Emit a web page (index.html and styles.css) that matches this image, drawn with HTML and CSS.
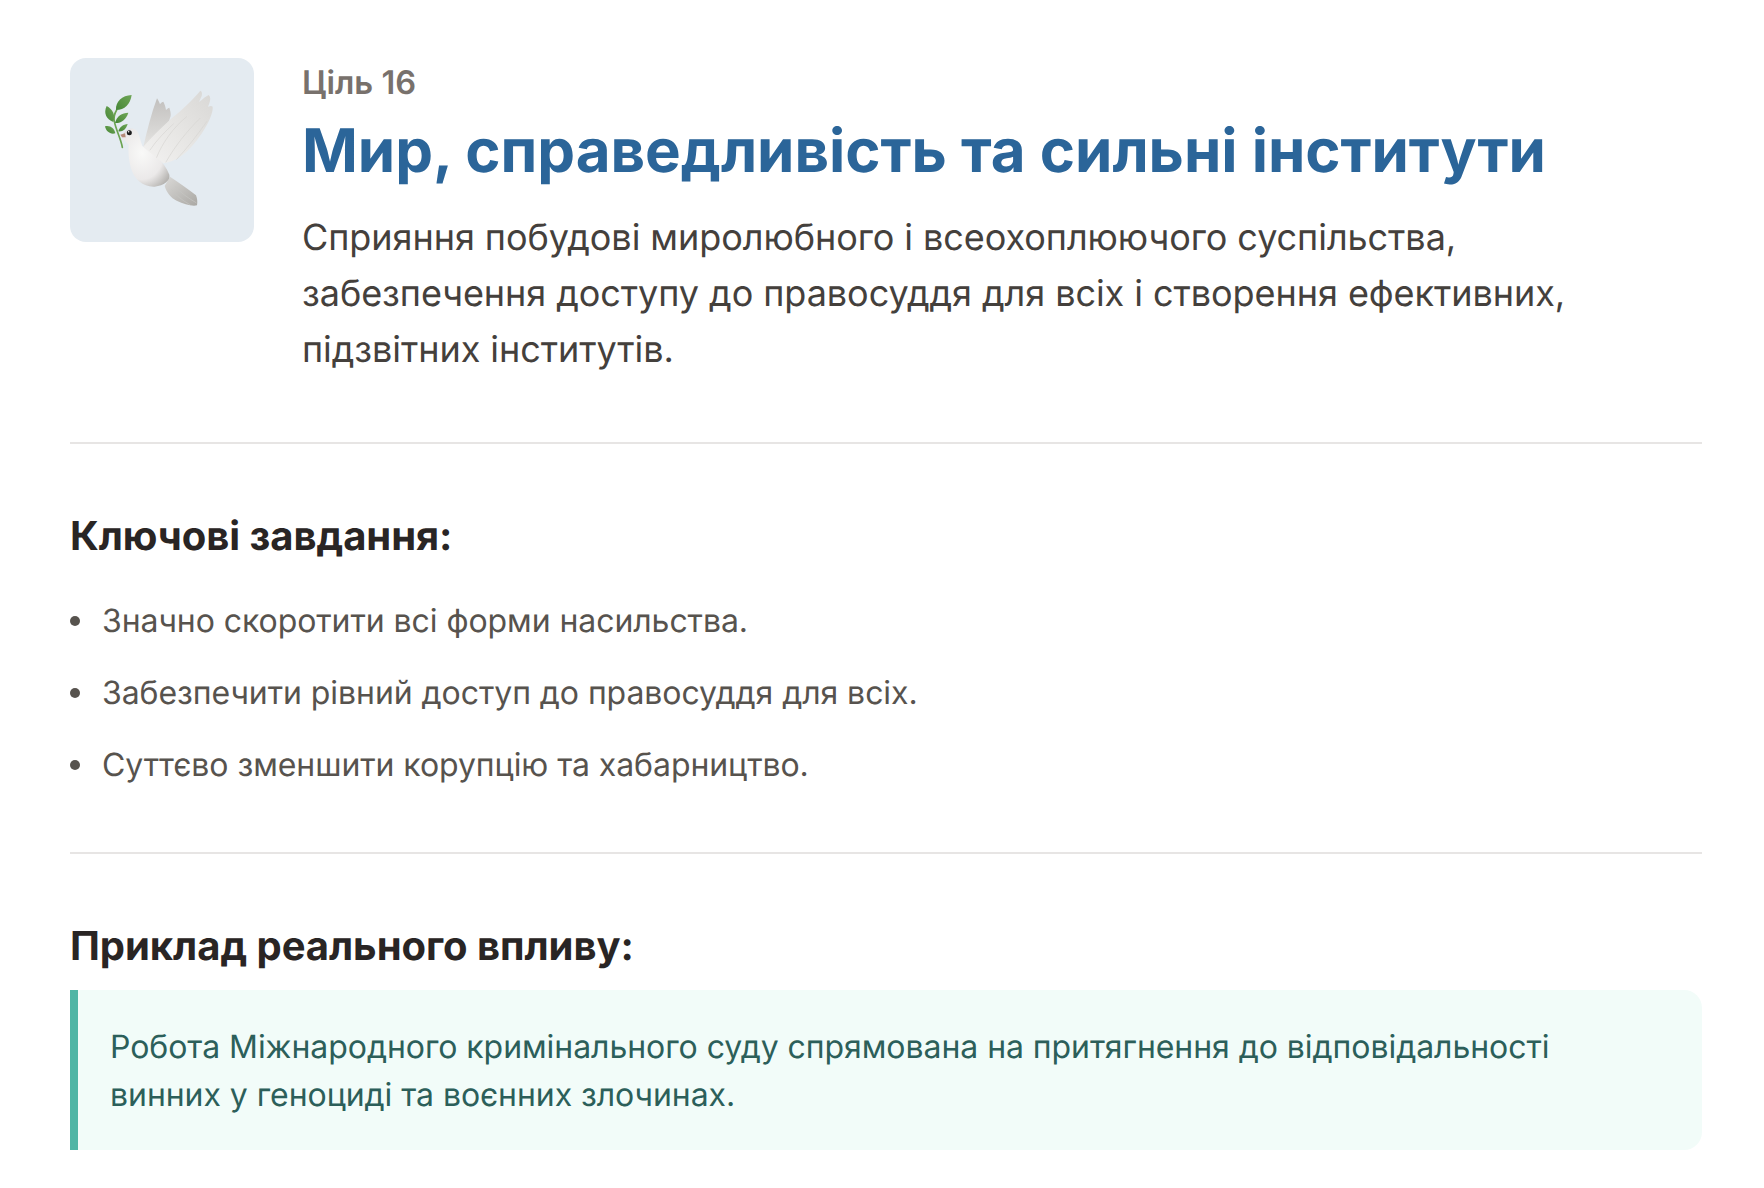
FILE: index.html
```html
<!DOCTYPE html>
<html lang="uk">
<head>
<meta charset="utf-8">
<title>Ціль 16</title>
<link rel="stylesheet" href="styles.css">
</head>
<body>
<main class="page">
  <header class="head">
    <div class="icon">
      <svg class="dove" viewBox="30 24 552 552" aria-hidden="true">
        <defs>
          <linearGradient id="wingBack" x1="0" y1="0" x2="0" y2="1">
            <stop offset="0" stop-color="#c2c0be"/><stop offset=".6" stop-color="#d6d5d3"/><stop offset="1" stop-color="#e6e5e3"/>
          </linearGradient>
          <linearGradient id="wingFront" x1="1" y1="0" x2="0" y2="1">
            <stop offset="0" stop-color="#d8d7d5"/><stop offset=".5" stop-color="#e6e5e3"/><stop offset="1" stop-color="#f3f2f1"/>
          </linearGradient>
          <radialGradient id="bodyFill" cx=".42" cy=".42" r=".7">
            <stop offset="0" stop-color="#f9f9f8"/><stop offset=".65" stop-color="#ebe9e9"/><stop offset="1" stop-color="#b6b4b1"/>
          </radialGradient>
          <linearGradient id="tailFill" x1="0" y1="0" x2="1" y2="1">
            <stop offset="0" stop-color="#dad9d7"/><stop offset="1" stop-color="#aaa8a4"/>
          </linearGradient>
          <linearGradient id="leafFill" x1="0" y1="1" x2="1" y2="0">
            <stop offset="0" stop-color="#468636"/><stop offset="1" stop-color="#6fa657"/>
          </linearGradient>
        </defs>
        <path d="M187 292C184 270 168 240 163 214C161 204 164 190 170 180" fill="none" stroke="#6ba352" stroke-width="5" stroke-linecap="round"/>
        <path d="M168 180C166 156 186 136 215 135C211 162 194 180 168 180Z" fill="url(#leafFill)"/>
        <path d="M160 216C138 208 130 188 140 168C158 178 168 196 160 216Z" fill="url(#leafFill)"/>
        <path d="M165 219C170 198 186 188 205 188C199 208 184 220 165 219Z" fill="url(#leafFill)"/>
        <path d="M175 244C178 231 190 223 203 222C199 237 188 246 175 244Z" fill="url(#leafFill)"/>
        <path d="M166 250C150 254 138 244 135 229C150 225 163 234 166 250Z" fill="url(#leafFill)"/>
        <path d="M250 290C262 240 274 190 291 145C295 150 298 158 300 163C303 158 307 156 310 155C314 162 317 172 318 180C322 176 325 174 328 173C331 182 333 190 332 198L300 292Z" fill="url(#wingBack)"/>
        <path d="M330 380C356 398 386 418 408 436C412 446 413 456 411 466C396 470 372 462 350 452C332 444 320 428 314 408Z" fill="url(#tailFill)"/>
        <path d="M345 410C362 428 384 444 408 458M335 420C350 438 368 452 390 464" fill="none" stroke="#c6c5c2" stroke-width="2" stroke-linecap="round"/>
        <path d="M186 262C190 240 214 228 228 240C238 250 240 268 247 288C270 305 312 330 328 374C332 392 312 406 284 410C252 412 222 390 212 352C206 328 204 304 206 284C198 276 190 270 186 262Z" fill="url(#bodyFill)"/>
        <path d="M250 290C275 262 305 232 335 205C365 180 398 150 421 122C426 124 427 130 425 138L417 156C428 148 438 138 446 135C452 140 452 150 448 160L444 170C450 168 455 167 458 170C459 184 452 202 444 218C430 246 408 276 382 303C360 324 336 336 310 340C290 322 266 306 250 290Z" fill="url(#wingFront)"/>
        <path d="M290 322C306 280 340 232 380 200M318 336C344 290 380 244 420 205M350 328C380 296 410 258 440 215M270 300C290 270 315 245 340 222" fill="none" stroke="#d6d4d2" stroke-width="2" stroke-linecap="round"/>
        <path d="M181 254L195 250L197 262L186 262Z" fill="#b58a78"/>
        <circle cx="208" cy="248" r="7.5" fill="#1d1d1d"/>
        <circle cx="206" cy="245" r="2.2" fill="#fff"/>
      </svg>
    </div>
    <div class="intro">
      <div class="goal">Ціль 16</div>
      <h1 class="title">Мир, справедливість та сильні інститути</h1>
      <p class="lead">Сприяння побудові миролюбного і всеохоплюючого суспільства, забезпечення доступу до правосуддя для всіх і створення ефективних, підзвітних інститутів.</p>
    </div>
  </header>
  <section class="tasks">
    <h2 class="sub">Ключові завдання:</h2>
    <ul class="list">
      <li>Значно скоротити всі форми насильства.</li>
      <li>Забезпечити рівний доступ до правосуддя для всіх.</li>
      <li>Суттєво зменшити корупцію та хабарництво.</li>
    </ul>
  </section>
  <section class="impact">
    <h2 class="sub">Приклад реального впливу:</h2>
    <blockquote class="quote">Робота Міжнародного кримінального суду спрямована на притягнення до відповідальності<br>винних у геноциді та воєнних злочинах.</blockquote>
  </section>
</main>
</body>
</html>
```
FILE: styles.css
```css
* { box-sizing: border-box; }
html, body { margin: 0; background: #fff; }
body { font-family: Inter, "Liberation Sans", sans-serif; text-rendering: geometricPrecision; }
.page { padding: 58px 62px 0 70px; width: 1764px; }
.head { display: flex; gap: 48px; padding-bottom: 65px; border-bottom: 2px solid #e7e5e4; }
.icon { flex: none; width: 184px; height: 184px; border-radius: 16px; background: #e4ebf1; display: flex; align-items: center; justify-content: center; }
.dove { display: block; width: 184px; height: 184px; }
.goal { font-size: 32.6px; line-height: 48px; font-weight: 600; color: #78716c; }
.title { margin: 9px 0 0; font-size: 60px; line-height: 72px; font-weight: 700; color: #2b6599; letter-spacing: -0.03px; }
.lead { margin: 22px 0 0; font-size: 36px; line-height: 56px; color: #44403c; letter-spacing: -0.06px; }
.sub { margin: 0; font-size: 40px; line-height: 48px; font-weight: 700; color: #292524; letter-spacing: -0.05px; }
.tasks { padding: 68px 0 37px; border-bottom: 2px solid #e7e5e4; }
.list { margin: 39px 0 0; padding: 0; list-style: none; font-size: 32px; color: #57534e; letter-spacing: -0.07px; }
.list li { display: flex; align-items: center; gap: 22px; margin-bottom: 28px; line-height: 44px; }
.list li::before { content: ""; flex: none; width: 10px; height: 10px; border-radius: 50%; background: #57534e; }
.impact { padding-top: 68px; }
.quote { margin: 20px 0 0; padding: 33px 32px 31px; border-left: 8px solid #4fb5a5; border-radius: 0 18px 18px 0; background: #f2fcf9; font-size: 32px; line-height: 48px; color: #2c5f5a; letter-spacing: -0.06px; }
```
